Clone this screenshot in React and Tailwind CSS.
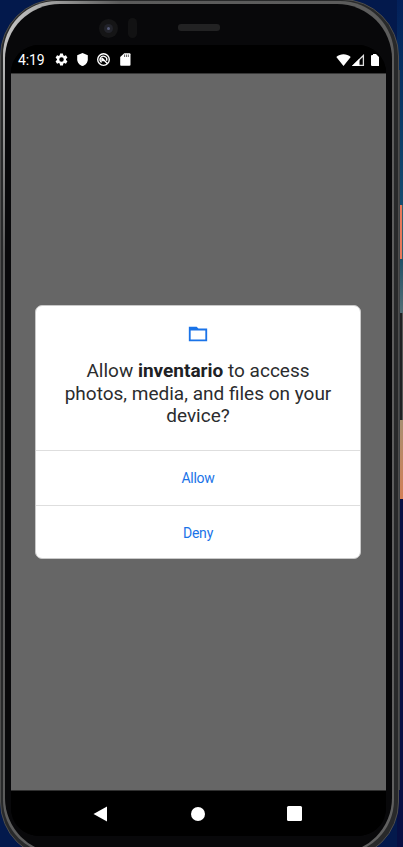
import React from "react";

function StatusBar() {
  return (
    <div className="flex h-[29px] w-full items-center border-b border-[#383838] bg-black pl-[7px] pr-[7px] pt-px text-white">
      <span className="w-[27px] whitespace-nowrap text-[14px] leading-[28px] tracking-[-0.1px]">4:19</span>
      <svg className="ml-[9px]" width="15" height="15" viewBox="0 0 24 24" fill="currentColor">
        <path d="M19.14 12.94c.04-.3.06-.61.06-.94 0-.32-.02-.64-.07-.94l2.03-1.58a.49.49 0 0 0 .12-.61l-1.92-3.32a.49.49 0 0 0-.59-.22l-2.39.96c-.5-.38-1.03-.7-1.62-.94l-.36-2.54a.48.48 0 0 0-.48-.41h-3.84c-.24 0-.43.17-.47.41l-.36 2.54c-.59.24-1.13.57-1.62.94l-2.39-.96a.48.48 0 0 0-.59.22L2.74 8.87c-.12.21-.08.47.12.61l2.03 1.58c-.05.3-.09.63-.09.94s.02.64.07.94l-2.03 1.58a.49.49 0 0 0-.12.61l1.92 3.32c.12.22.37.29.59.22l2.39-.96c.5.38 1.03.7 1.62.94l.36 2.54c.05.24.24.41.48.41h3.84c.24 0 .44-.17.47-.41l.36-2.54c.59-.24 1.13-.56 1.62-.94l2.39.96c.22.08.47 0 .59-.22l1.92-3.32a.49.49 0 0 0-.12-.61zM12 15.6a3.6 3.6 0 1 1 0-7.2 3.6 3.6 0 0 1 0 7.2z" />
      </svg>
      <svg className="ml-[6px]" width="15" height="15" viewBox="0 0 24 24" fill="currentColor">
        <path d="M12 1.5 3.500 5v6.500c0 5.300 3.700 9.500 8.500 11 4.800-1.500 8.500-5.700 8.500-11V5z" />
      </svg>
      <svg className="ml-[6px]" width="15" height="15" viewBox="0 0 24 24" fill="none" stroke="currentColor" strokeWidth="2.200">
        <circle cx="12" cy="12" r="9.300" />
        <path d="M9 16.500A5.300 5.300 0 1 1 16.800 14" />
        <path d="M9.500 9.500 18 18.500M9.500 9.500v4h4" />
      </svg>
      <svg className="ml-[7px]" width="15" height="15" viewBox="0 0 24 24">
        <path fill="currentColor" d="M18.500 2H10L3.500 8v12.500c0 1 .9 1.500 1.500 1.500h13.500c1.100 0 1.500-.7 1.500-1.500v-17c0-1-.6-1.500-1.500-1.500z" />
        <path stroke="#555" strokeWidth="1.500" d="M10.500 4v4M13.500 4v4M16.500 4v4" />
      </svg>
      <svg className="ml-auto" width="15" height="12" viewBox="0 0 15 12" fill="currentColor">
        <path d="M.3 3C4.300-.6 10.700-.6 14.700 3L7.500 12z" />
      </svg>
      <svg className="ml-px" width="13" height="12" viewBox="0 0 13 12">
        <path fill="none" stroke="#ddd" strokeWidth="1.300" d="M1.500 11.300 11.400 1.500v9.800z" />
        <path fill="white" d="M0 12 7.500 4.800V12z" />
      </svg>
      <svg className="ml-[6px]" width="8" height="12" viewBox="0 0 8 12" fill="currentColor">
        <path d="M0 2q0-1 1-1h1V0h3l3 3v9H1q-1 0-1-1z" />
      </svg>
    </div>
  );
}

function PermissionDialog() {
  return (
    <div className="flex h-[254px] w-[326px] flex-col overflow-hidden rounded-[7px] border border-[#c9c9c9] bg-white text-center">
      <div className="flex h-[144px] flex-col items-center pt-[17px]">
        <svg width="22" height="22" viewBox="0 0 24 24" fill="#1a73e8">
          <path d="M2 4h8.500l2 2H22v14H2zM4 8.200V18h16V8.200z" fillRule="evenodd" />
        </svg>
        <p className="mt-[15px] whitespace-nowrap text-[19px] leading-[22.500px] text-[#2b2c2e]">
          Allow <b className="font-bold text-[#202124]">inventario</b> to access
          <br />
          photos, media, and files on your
          <br />
          device?
        </p>
      </div>
      <button className="h-[55px] border-t border-[#dedede] pt-px text-[14px] tracking-[-0.3px] text-[#1a73e8]">Allow</button>
      <button className="h-[53px] border-t border-[#dedede] pt-[2px] text-[14px] tracking-[-0.2px] text-[#1a73e8]">Deny</button>
    </div>
  );
}

function NavBar() {
  return (
    <div className="flex h-[46px] w-full items-center border-t border-[#303030] bg-black text-white">
      <svg className="ml-[82px]" width="15" height="16" viewBox="0 0 15 16" fill="currentColor">
        <path d="M.5 8 14 .5v15z" />
      </svg>
      <div className="ml-[83px] size-[14px] rounded-full bg-white" />
      <div className="ml-[82px] size-[15px] rounded-[1.500px] bg-white" />
    </div>
  );
}

export default function App() {
  return (
    <div className="relative h-[847px] w-[403px] overflow-hidden bg-[#03194c] font-[Roboto,sans-serif]">
      <div className="absolute right-0 top-0 flex h-full w-[6px] flex-col">
        <div className="h-[205px] bg-linear-to-b from-[#03205a] to-[#154b70]" />
        <div className="h-[54px] border-r border-[#35606f] bg-[#e9785b]" />
        <div className="h-[54px] bg-linear-to-b from-[#1d4f66] to-[#526e75]" />
        <div className="h-[107px] border-r border-[#555] bg-[#202122]" />
        <div className="h-[79px] bg-linear-to-b from-[#a88e70] to-[#d27e55]" />
        <div className="flex-1 bg-[#070f43]" />
      </div>
      <div className="absolute left-[399px] top-[70px] h-[720px] w-px bg-[#3d4144]" />
      <div className="relative -mt-px h-[860px] w-[399px] rounded-[57px] border border-[#4d4d4d] bg-[#28292a] pb-[4px] pl-[2px] pr-[4px] pt-px">
        <div className="h-full w-full rounded-[54px] bg-linear-to-br from-[#c4c4c4] from-2% via-[#5a5a5a] via-15% to-[#606060] pb-px pl-[2px] pr-[2px] pt-[3px]">
          <div className="h-full w-full rounded-[55px] bg-[#08080a] pt-[41px]">
            <div className="ml-[6px] flex h-[791px] w-[375px] flex-col overflow-hidden rounded-[28px] bg-black">
              <StatusBar />
              <div className="flex h-[716px] items-center justify-center bg-[#666] pr-px">
                <PermissionDialog />
              </div>
              <NavBar />
            </div>
          </div>
        </div>
        <div className="absolute left-[98px] top-[19px] flex size-[19px] items-center justify-center rounded-full bg-[#151516]">
          <div className="flex size-[9px] items-center justify-center rounded-full bg-[#22232a]">
            <div className="size-[3px] rounded-full bg-[#555a78]" />
          </div>
        </div>
        <div className="absolute left-[127px] top-[18px] h-[20px] w-[9px] rounded-full bg-[#121213]" />
        <div className="absolute left-[177px] top-[24px] h-[7px] w-[42px] rounded-[3px] bg-[#222223]" />
      </div>
    </div>
  );
}
